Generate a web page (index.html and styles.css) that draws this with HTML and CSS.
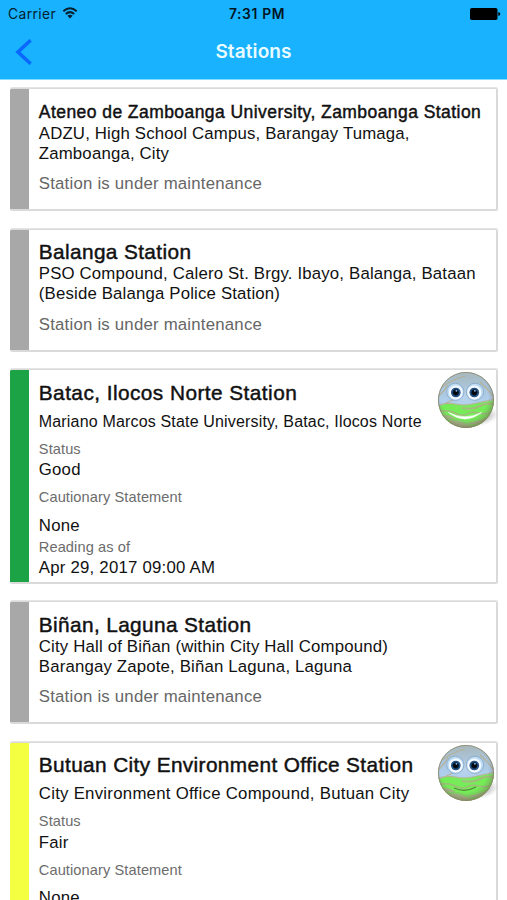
FILE: index.html
```
<!DOCTYPE html>
<html lang="en">
<head>
<meta charset="utf-8">
<title>Stations</title>
<link rel="stylesheet" href="styles.css">
</head>
<body>
<svg class="defs" width="0" height="0" aria-hidden="true">
  <defs>
    <radialGradient id="shade" cx="47%" cy="42%" r="58%">
      <stop offset="0" stop-color="#fff" stop-opacity=".15"/>
      <stop offset=".7" stop-color="#888" stop-opacity="0"/>
      <stop offset="1" stop-color="#6a6040" stop-opacity=".65"/>
    </radialGradient>
    <linearGradient id="sky" x1="0" y1="0" x2="0" y2="1">
      <stop offset="0" stop-color="#a9b9bb"/>
      <stop offset=".25" stop-color="#a9c3d8"/>
      <stop offset=".5" stop-color="#afcfee"/>
    </linearGradient>
    <radialGradient id="iris">
      <stop offset="0" stop-color="#000"/>
      <stop offset=".5" stop-color="#050d18"/>
      <stop offset=".8" stop-color="#245a94"/>
      <stop offset="1" stop-color="#173e6c"/>
    </radialGradient>
    <radialGradient id="cast">
      <stop offset=".5" stop-color="#bbb" stop-opacity=".7"/>
      <stop offset="1" stop-color="#ccc" stop-opacity="0"/>
    </radialGradient>
    <clipPath id="ball"><circle cx="29" cy="29" r="28"/></clipPath>
    <g id="face">
      <ellipse cx="43" cy="46" rx="20" ry="9" fill="url(#cast)" transform="rotate(-12 43 46)"/>
      <g clip-path="url(#ball)">
        <rect width="58" height="58" fill="url(#sky)"/>
        <path d="M0 36Q9 31 18 33T36 33T58 29V58H0Z" fill="#74ee55"/>
        <g fill="none" stroke="#b9ae88" stroke-width="1.1" opacity=".85">
          <path d="M3 17Q16 8 28 5M2 25Q8 19 11 14M9 32L16 29M43 11Q50 17 56 25"/>
          <path d="M0 35Q9 31 18 33T36 33T58 28"/>
        </g>
        <path d="M25 37Q36 39 43 35T58 34" fill="none" stroke="#a3bd7c" stroke-width="2.2"/>
        <path d="M0 41Q10 38 18 42T30 43T42 42T58 40" fill="none" stroke="#a3b97c" stroke-width="1.5"/>
        <path d="M2 44Q12 43 19 48T36 51T54 45V58H4Z" fill="#a9ba86"/>
        <path d="M8 49Q20 47 29 52T48 50" fill="none" stroke="#7ddd60" stroke-width="2"/>
        <rect width="58" height="58" fill="url(#shade)"/>
      </g>
      <circle cx="29" cy="29" r="27.6" fill="none" stroke="#8a8568" stroke-width=".8"/>
      <g fill="#bddcf6" stroke="#86a6c2" stroke-width=".8">
        <circle cx="18.3" cy="20.8" r="8.6"/><circle cx="38" cy="20.8" r="8.6"/>
      </g>
      <g fill="#f5faff">
        <circle cx="18.8" cy="21.5" r="6.9"/><circle cx="37.3" cy="21.5" r="6.9"/>
      </g>
      <g fill="url(#iris)">
        <circle cx="18.8" cy="21.5" r="4.8"/><circle cx="37.3" cy="21.5" r="4.8"/>
      </g>
      <g fill="#8fc3f5"><circle cx="19.4" cy="19.8" r=".9"/><circle cx="37.9" cy="19.8" r=".9"/></g>
    </g>
  </defs>
</svg>

<header class="top">
  <div class="statusbar">
    <div class="carrier">Carrier
      <svg width="16" height="12" viewBox="0 0 16 12"><g fill="none" stroke="#06202e" stroke-width="2"><path d="M1.3 4.3Q8-1.7 14.7 4.3"/><path d="M3.8 7Q8 3.3 12.2 7"/></g><path d="M5.4 8.7Q8 6.8 10.6 8.7L8 11.6Z" fill="#06202e"/></svg>
    </div>
    <div class="time">7:31 PM</div>
    <svg class="battery" width="31" height="12" viewBox="0 0 31 12"><rect x="0" y="0" width="27.5" height="12" rx="1.8"/><path d="M28.3 4Q30.3 4.5 30.3 6T28.3 8Z"/></svg>
  </div>
  <div class="navbar">
    <svg class="back" width="18" height="26" viewBox="0 0 18 26"><path d="M15.6 1.3L3 13L15.6 24.7" fill="none" stroke="#0b68ff" stroke-width="3.6"/></svg>
    <h1>Stations</h1>
  </div>
</header>

<main class="list">
  <article class="card">
    <h2 class="small">Ateneo de Zamboanga University, Zamboanga Station</h2>
    <p class="address">ADZU, High School Campus, Barangay Tumaga,<br>Zamboanga, City</p>
    <p class="note">Station is under maintenance</p>
  </article>
  <article class="card">
    <h2>Balanga Station</h2>
    <p class="address">PSO Compound, Calero St. Brgy. Ibayo, Balanga, Bataan<br>(Beside Balanga Police Station)</p>
    <p class="note">Station is under maintenance</p>
  </article>
  <article class="card reading good">
    <svg class="smiley" width="62" height="60" viewBox="0 0 62 60"><use href="#face"/><path d="M11.5 41.5Q28 50 44.5 41.5Q28 54.5 11.5 41.5Z" fill="#fff" stroke="#fff" stroke-width=".6"/></svg>
    <h2 class="wide">Batac, Ilocos Norte Station</h2>
    <p class="address fitted">Mariano Marcos State University, Batac, Ilocos Norte</p>
    <dl>
      <dt>Status</dt><dd>Good</dd>
      <dt>Cautionary Statement</dt><dd class="statement">None</dd>
      <dt class="asof">Reading as of</dt><dd>Apr 29, 2017 09:00 AM</dd>
    </dl>
  </article>
  <article class="card">
    <h2>Biñan, Laguna Station</h2>
    <p class="address">City Hall of Biñan (within City Hall Compound)<br>Barangay Zapote, Biñan Laguna, Laguna</p>
    <p class="note">Station is under maintenance</p>
  </article>
  <article class="card reading fair">
    <svg class="smiley" width="62" height="60" viewBox="0 0 62 60"><use href="#face"/><path d="M17 44Q28 49 39 43" fill="none" stroke="#53853a" stroke-width="1.2"/></svg>
    <h2>Butuan City Environment Office Station</h2>
    <p class="address loose">City Environment Office Compound, Butuan City</p>
    <dl>
      <dt>Status</dt><dd>Fair</dd>
      <dt>Cautionary Statement</dt><dd class="statement">None</dd>
    </dl>
  </article>
</main>
</body>
</html>
```
FILE: styles.css
```
* { box-sizing: border-box; margin: 0; padding: 0; }
html, body { height: 900px; overflow: hidden; }
body { background: #fff; color: #111; font-family: "Liberation Sans", Arial, sans-serif; display: flex; flex-direction: column; }
.defs { position: absolute; }
.top { flex: none; height: 80px; background: #18b2ff; border-bottom: 1px solid #84ddfc; font-family: Inter, sans-serif; }
.statusbar { display: grid; grid-template-columns: 1fr auto 1fr; align-items: center; height: 27px; padding: 0 6px 0 8px; font-size: 13.8px; letter-spacing: .4px; color: #06202e; }
.carrier { display: flex; align-items: center; gap: 5.5px; }
.carrier svg { margin-top: -2px; }
.time { font-weight: 600; color: #03151f; padding-left: 5px; letter-spacing: .65px; }
.battery { justify-self: end; }
.navbar { display: grid; grid-template-columns: 40px 1fr 40px; align-items: center; height: 50px; }
.back { margin-left: 15px; }
.navbar h1 { font-size: 19px; font-weight: 600; line-height: 24px; text-align: center; color: #e9fbff; letter-spacing: .1px; }
.list { flex: 1; min-height: 0; overflow: hidden; display: flex; flex-direction: column; gap: 17.5px; padding: 8px 9px 0 10px; }
.card { flex: none; position: relative; height: 123px; padding: 10.8px 0 0 28.8px; border: solid #dadada; border-width: 1px 2px 2px 0; border-radius: 2px; box-shadow: 0 -1px 0 #e4e4e4; background: linear-gradient(#a8a8a8, #a8a8a8) 0 0 / 19px 100% no-repeat; }
.reading { height: 214.5px; }
.good { background-image: linear-gradient(#1ba345, #1ba345); }
.fair { background-image: linear-gradient(#f5ff42, #f5ff42); }
.card h2 { font-size: 20.8px; font-weight: 400; line-height: 24px; letter-spacing: .38px; white-space: nowrap; -webkit-text-stroke: .45px #111; }
.card .small { font-size: 17.5px; letter-spacing: .44px; position: relative; top: .6px; }
.card .wide { letter-spacing: .45px; }
.address { font-size: 16.8px; line-height: 19.7px; letter-spacing: .17px; white-space: nowrap; }
.reading .address { margin-top: 7.2px; }
.address.fitted { font-size: 16px; letter-spacing: .17px; }
.address.loose { letter-spacing: .26px; }
.note { margin-top: 11px; font-size: 16.8px; line-height: 20px; letter-spacing: .21px; color: #666; }
dt { margin-top: 8px; font-size: 14.6px; line-height: 18px; letter-spacing: .1px; color: #6c6c6c; }
dd { margin-top: 2.6px; font-size: 16.8px; line-height: 20px; letter-spacing: .22px; }
.statement { margin-top: 9.3px; }
.asof { margin-top: 2.2px; }
.smiley { position: absolute; right: -3px; top: 1px; }
```
